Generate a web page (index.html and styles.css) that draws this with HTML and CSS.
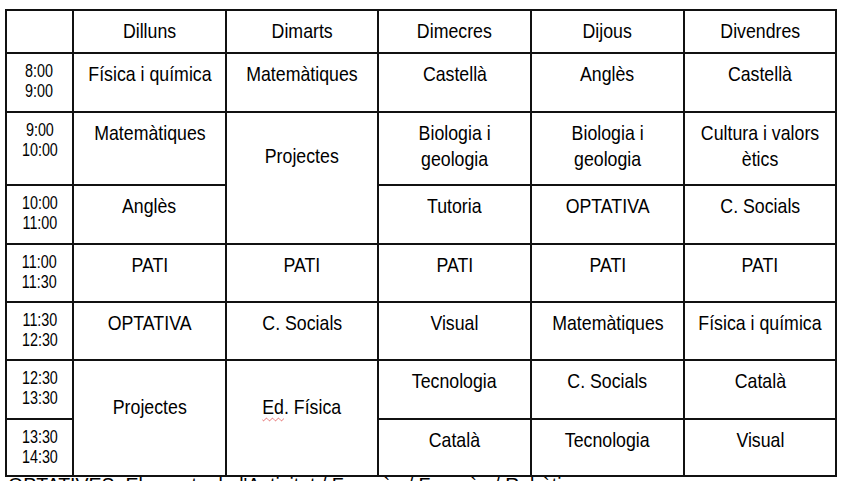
FILE: index.html
```html
<!DOCTYPE html>
<html lang="ca">
<head>
<meta charset="utf-8">
<title>Horari</title>
<link rel="stylesheet" href="styles.css">
</head>
<body>
<table class="timetable">
  <colgroup>
    <col class="c-time">
    <col class="c-a">
    <col class="c-b">
    <col class="c-a">
    <col class="c-a">
    <col class="c-b">
  </colgroup>
  <tr class="r-head">
    <th></th><th><span class="t">Dilluns</span></th><th><span class="t">Dimarts</span></th><th><span class="t">Dimecres</span></th><th><span class="t">Dijous</span></th><th><span class="t">Divendres</span></th>
  </tr>
  <tr class="r1">
    <td class="time"><span class="t">8:00<br>9:00</span></td>
    <td><span class="t">Física i química</span></td><td><span class="t">Matemàtiques</span></td><td><span class="t">Castellà</span></td><td><span class="t">Anglès</span></td><td><span class="t">Castellà</span></td>
  </tr>
  <tr class="r2">
    <td class="time"><span class="t">9:00<br>10:00</span></td>
    <td><span class="t">Matemàtiques</span></td>
    <td rowspan="2" class="span span-top"><span class="t">Projectes</span></td>
    <td><span class="t">Biologia i<br>geologia</span></td><td><span class="t">Biologia i<br>geologia</span></td><td><span class="t">Cultura i valors<br>ètics</span></td>
  </tr>
  <tr class="r3">
    <td class="time"><span class="t">10:00<br>11:00</span></td>
    <td><span class="t">Anglès</span></td><td><span class="t">Tutoria</span></td><td><span class="t">OPTATIVA</span></td><td><span class="t">C. Socials</span></td>
  </tr>
  <tr class="r4">
    <td class="time"><span class="t">11:00<br>11:30</span></td>
    <td><span class="t">PATI</span></td><td><span class="t">PATI</span></td><td><span class="t">PATI</span></td><td><span class="t">PATI</span></td><td><span class="t">PATI</span></td>
  </tr>
  <tr class="r5">
    <td class="time"><span class="t">11:30<br>12:30</span></td>
    <td><span class="t">OPTATIVA</span></td><td><span class="t">C. Socials</span></td><td><span class="t">Visual</span></td><td><span class="t">Matemàtiques</span></td><td><span class="t">Física i química</span></td>
  </tr>
  <tr class="r6">
    <td class="time"><span class="t">12:30<br>13:30</span></td>
    <td rowspan="2" class="span"><span class="t">Projectes</span></td>
    <td rowspan="2" class="span"><span class="t"><span class="spell">Ed</span>. Física</span></td>
    <td><span class="t">Tecnologia</span></td><td><span class="t">C. Socials</span></td><td><span class="t">Català</span></td>
  </tr>
  <tr class="r7">
    <td class="time"><span class="t">13:30<br>14:30</span></td>
    <td><span class="t">Català</span></td><td><span class="t">Tecnologia</span></td><td><span class="t">Visual</span></td>
  </tr>
</table>
<p class="note">OPTATIVES: Elements de l'Activitat / Francès / Francès / Robòtica</p>
</body>
</html>
```

FILE: styles.css
```css
html, body {
  margin: 0;
  padding: 0;
  background: #fff;
}
body {
  font-family: "Liberation Sans", Arial, sans-serif;
  color: #000;
  overflow: hidden;
}
.timetable {
  margin: 9px 0 0 5px;
  width: 832px;
  table-layout: fixed;
  border-collapse: separate;
  border-spacing: 0;
  border-top: 2px solid #111;
  border-left: 2px solid #111;
}
.c-time { width: 67px; }
.c-a { width: 153px; }
.c-b { width: 152px; }
.timetable th,
.timetable td {
  box-sizing: border-box;
  border-right: 2px solid #111;
  border-bottom: 2px solid #111;
  padding: 7px 0 0;
  text-align: center;
  vertical-align: top;
  font-size: 21px;
  font-weight: normal;
  line-height: 26px;
}
.t {
  display: inline-block;
  white-space: nowrap;
  margin: 0 -30px;
  transform: scaleX(0.845);
}
.timetable th { padding-top: 7px; }
.timetable td.time {
  font-size: 17.5px;
  line-height: 19.5px;
  padding-top: 8px;
}
.timetable td.time .t { transform: scaleX(0.82); }
.timetable td.span { padding-top: 33px; }
.timetable td.span-top { padding-top: 30px; }
.r-head { height: 43px; }
.r1 { height: 59px; }
.r2 { height: 73px; }
.r3 { height: 59px; }
.r4 { height: 58px; }
.r5 { height: 58px; }
.r6 { height: 59px; }
.r7 { height: 57px; }
.spell {
  text-decoration: underline wavy #e36a6a;
  text-decoration-thickness: 1px;
  text-underline-offset: 3px;
}
.note {
  margin: -3px 0 0 8px;
  font-size: 19.5px;
  line-height: 22px;
  white-space: nowrap;
}
```
